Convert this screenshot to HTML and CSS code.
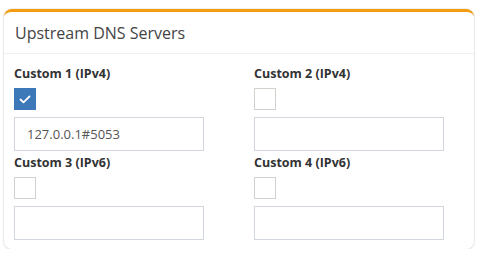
FILE: index.html
```html
<!DOCTYPE html>
<html>
<head>
<meta charset="utf-8">
<link rel="stylesheet" href="styles.css">
</head>
<body>
<div class="card">
  <div class="card-header"><h3 class="title">Upstream DNS Servers</h3></div>
  <div class="card-body">
    <div class="field">
      <div class="label">Custom 1 (IPv4)</div>
      <div class="check checked"><svg viewBox="0 0 22 22" width="22" height="22"><path d="M6.5 11.5 L9.5 14.3 L15.5 8.5" fill="none" stroke="#fff" stroke-width="1.8" stroke-linecap="round" stroke-linejoin="round"/></svg></div>
      <div class="input">127.0.0.1#5053</div>
    </div>
    <div class="field">
      <div class="label">Custom 2 (IPv4)</div>
      <div class="check"></div>
      <div class="input"></div>
    </div>
    <div class="field">
      <div class="label">Custom 3 (IPv6)</div>
      <div class="check"></div>
      <div class="input"></div>
    </div>
    <div class="field">
      <div class="label">Custom 4 (IPv6)</div>
      <div class="check"></div>
      <div class="input"></div>
    </div>
  </div>
</div>
</body>
</html>
```
FILE: styles.css
```css
html, body { margin: 0; padding: 0; background: #fff; }
body { font-family: "Open Sans", "Noto Sans", sans-serif; color: #333; padding: 9px 9px 0 4px; }
.card {
  width: 470px;
  box-sizing: border-box;
  border-top: 3px solid #f39c12;
  border-radius: 8px;
  background: #fff;
  box-shadow: 0 0 0 1px rgba(0,0,0,0.06), 0 1px 3px rgba(0,0,0,0.08);
}
.card-header {
  height: 41px;
  border-bottom: 1px solid #f0f0f0;
  display: flex;
  align-items: center;
  padding-left: 11px;
}
.title { margin: 0; font-weight: 400; font-size: 16px; color: #444; }
.card-body {
  display: grid;
  grid-template-columns: 240px 220px;
  padding: 11px 0 9px 10px;
  row-gap: 3px;
}
.label { font-weight: 700; font-size: 12.5px; line-height: 18px; color: #333; height: 20px; }
.check {
  width: 22px; height: 22px; box-sizing: border-box;
  border: 1px solid #d4d1cc; margin-top: 3px;
}
.check.checked { background: #3d78b8; border-color: #3d78b8; }
.check svg { display: block; margin: -1px; }
.input {
  margin-top: 7px;
  width: 190px; height: 34px; box-sizing: border-box;
  border: 1px solid #d2d6de;
  padding: 0 12px;
  font-size: 13px; line-height: 32px; color: #555;
}
```
